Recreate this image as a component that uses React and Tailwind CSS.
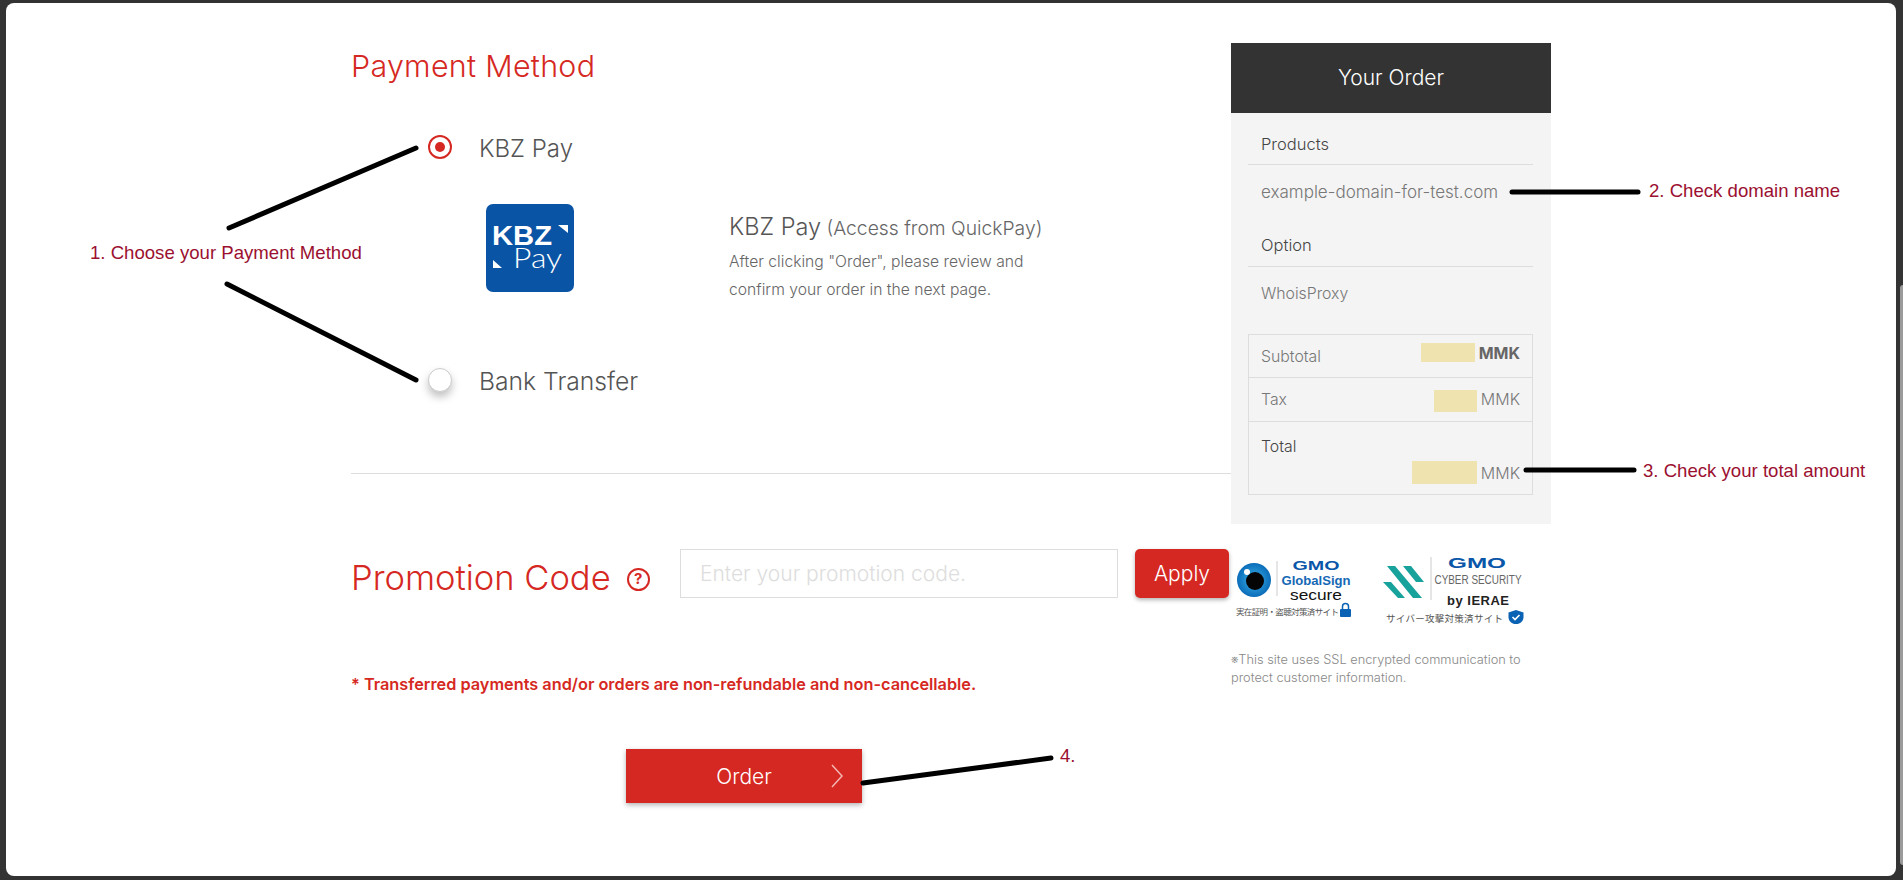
const bodyFont = "font-['Inter','Noto_Sans_CJK_JP',sans-serif]";

function GlobalSignBadge() {
  return (
    <svg width="125" height="68" viewBox="0 0 125 68" className="mt-[3px] shrink-0">
      <defs>
        <radialGradient id="eye" cx="50%" cy="50%" r="50%">
          <stop offset="0%" stopColor="#3db4ea" />
          <stop offset="100%" stopColor="#0a6cb8" />
        </radialGradient>
      </defs>
      <circle cx="23" cy="25" r="17" fill="url(#eye)" />
      <circle cx="24" cy="26" r="9" fill="#050505" />
      <circle cx="16" cy="17" r="3" fill="#fff" />
      <line x1="46" y1="6" x2="46" y2="41" stroke="#ccc" />
      <text x="85" y="15" textAnchor="middle" fontFamily="Liberation Sans" fontWeight="700" fontSize="12" fill="#0a56a8" textLength="47" lengthAdjust="spacingAndGlyphs">GMO</text>
      <text x="85" y="30" textAnchor="middle" fontFamily="Liberation Sans" fontWeight="700" fontSize="13" fill="#1568b5" textLength="69" lengthAdjust="spacingAndGlyphs">GlobalSign</text>
      <text x="85" y="45" textAnchor="middle" fontFamily="Liberation Sans" fontSize="15" fill="#111" textLength="52" lengthAdjust="spacingAndGlyphs">secure</text>
      <text x="5" y="60" fontFamily="Noto Sans CJK JP" fontSize="8.500" fill="#555" textLength="103">実在証明・盗聴対策済サイト</text>
      <rect x="109" y="54" width="11" height="8" rx="1" fill="#0a62b5" />
      <path d="M111.500 54v-2.500a3 3 0 0 1 6 0V54" fill="none" stroke="#0a62b5" strokeWidth="1.500" />
    </svg>
  );
}

function IeraeBadge() {
  return (
    <svg width="150" height="72" viewBox="0 0 150 72" className="shrink-0">
      <g fill="#17a39c">
        <polygon points="7,14 15,14 42,46 33,46" />
        <polygon points="23,14 31,14 44,30 36,30" />
        <polygon points="3,30 11,30 25,46 18,46" />
      </g>
      <line x1="51" y1="5" x2="51" y2="48" stroke="#ccc" />
      <text x="97" y="16" textAnchor="middle" fontFamily="Liberation Sans" fontWeight="700" fontSize="15" fill="#0a56a8" textLength="58" lengthAdjust="spacingAndGlyphs">GMO</text>
      <text x="98" y="32" textAnchor="middle" fontFamily="Liberation Sans" fontSize="12" fill="#666" textLength="87" lengthAdjust="spacingAndGlyphs">CYBER SECURITY</text>
      <text x="98" y="53" textAnchor="middle" fontFamily="Liberation Sans" fontWeight="700" fontSize="13" fill="#222" textLength="62" lengthAdjust="spacing">by IERAE</text>
      <text x="6" y="70" fontFamily="Noto Sans CJK JP" fontSize="9.500" fill="#555" textLength="117">サイバー攻撃対策済サイト</text>
      <path d="M136 58l7.500 2.500v5c0 3.500-3 6-7.500 7-4.500-1-7.500-3.500-7.500-7v-5z" fill="#0a62b5" />
      <path d="M132.500 65l2.500 2.500 4.500-4.500" fill="none" stroke="#fff" strokeWidth="1.600" />
    </svg>
  );
}

function KbzLogo() {
  return (
    <svg width="88" height="88" viewBox="0 0 88 88" className="shrink-0">
      <rect width="88" height="88" rx="7" fill="#0a54a5" />
      <text x="6" y="41" fontFamily="Liberation Sans" fontWeight="700" fontSize="28" fill="#fff" textLength="60" lengthAdjust="spacingAndGlyphs">KBZ</text>
      <text x="27" y="64" fontFamily="Lato" fontWeight="300" fontSize="27" fill="#fff" textLength="49" lengthAdjust="spacingAndGlyphs">Pay</text>
      <polygon points="72,21 82,21 82,29" fill="#fff" />
      <polygon points="7,56 7,64 16,64" fill="#fff" />
    </svg>
  );
}

function TotalRow({ label, box, amountClass, rowClass, labelClass }) {
  return (
    <div className={rowClass}>
      <span className={labelClass}>{label}</span>
      <div className="flex items-start justify-end gap-[4px]">
        <span className={box} />
        <span className={amountClass}>MMK</span>
      </div>
    </div>
  );
}

export default function App() {
  return (
    <div className={`relative h-[880px] w-full overflow-hidden bg-[#333] pl-[6px] pr-[7px] pt-[3px] pb-[4px] ${bodyFont}`}>
      <div className="flex h-full rounded-lg bg-white pl-[345px]">
        {/* left column */}
        <div className="w-[880px] shrink-0">
          <h2 className="mt-[45px] h-[36px] text-[30.400px] leading-[36px] font-light tracking-[0.3px] whitespace-nowrap text-[#d62822]">Payment Method</h2>

          <div className="mt-[47px] flex h-[32px] items-center pl-[77px]">
            <span className="flex h-[24px] w-[24px] items-center justify-center rounded-full border-2 border-[#d62822] bg-white">
              <span className="h-[10px] w-[10px] rounded-full bg-[#d62822]" />
            </span>
            <span className="ml-[27px] pt-[3px] text-[24px] font-light text-[#555]">KBZ Pay</span>
          </div>

          <div className="mt-[41px] flex h-[88px] pl-[135px]">
            <KbzLogo />
            <div className="ml-[155px] pt-[9px] text-[#666]">
              <p className="h-[28px] text-[19.300px] leading-[28px] font-light whitespace-nowrap">
                <span className="text-[23.500px] text-[#555]">KBZ Pay</span> (Access from QuickPay)
              </p>
              <p className="mt-[7px] text-[15.700px] leading-[28px] font-light whitespace-nowrap">After clicking "Order", please review and<br />confirm your order in the next page.</p>
            </div>
          </div>

          <div className="mt-[72px] flex h-[32px] items-center pl-[77px]">
            <span className="h-[24px] w-[24px] rounded-full border border-[#ccc] bg-white shadow-[0_5px_8px_rgba(0,0,0,0.25)]" />
            <span className="ml-[27px] pt-[3px] text-[24.700px] font-light whitespace-nowrap text-[#555]">Bank Transfer</span>
          </div>

          <div className="mt-[77px] border-t border-[#ddd]" />

          <div className="mt-[75px] flex h-[50px] items-start">
            <div className="flex h-[58px] w-[329px] items-center">
              <span className="text-[34.500px] leading-[40px] font-light whitespace-nowrap text-[#d62822]">Promotion Code</span>
              <span className="ml-[16px] mt-[3px] flex h-[23px] w-[23px] items-center justify-center rounded-full border-2 border-[#d62822] text-[15px] font-bold text-[#d62822]">?</span>
            </div>
            <div className="flex h-[49px] w-[438px] items-center border border-[#ddd] bg-white pl-[19px] text-[21px] font-light text-[#ddd]">Enter your promotion code.</div>
            <button className="ml-[17px] h-[49px] w-[94px] rounded-[5px] bg-[#d62822] text-[21px] font-light text-white shadow-[0_2px_4px_rgba(0,0,0,0.3)]">Apply</button>
          </div>

          <p className="mt-[74px] text-[16.300px] leading-[22px] font-semibold whitespace-nowrap text-[#d62822]">* Transferred payments and/or orders are non-refundable and non-cancellable.</p>

          <div className="mt-[54px] pl-[275px]">
            <button className="relative flex h-[54px] w-[236px] items-center justify-center bg-[#d62822] pt-[2px] text-[21px] font-light text-white shadow-[0_2px_5px_rgba(0,0,0,0.3)]">
              Order
              <svg width="14" height="24" viewBox="0 0 14 24" className="absolute right-[18px] top-[15px]">
                <polyline points="2,1 12,12 2,23" fill="none" stroke="#f3b6b3" strokeWidth="1.500" />
              </svg>
            </button>
          </div>
        </div>

        {/* order summary */}
        <div className="w-[320px] shrink-0 pt-[40px]">
          <div className="bg-[#f4f4f4] pb-[29px]">
            <div className="flex h-[70px] items-center justify-center bg-[#333] text-[21px] font-light text-white">Your Order</div>
            <div className="pl-[17px] pr-[18px]">
              <div className="flex h-[52px] items-center border-b border-[#ddd] pl-[13px] pt-[11px] text-[16.500px] font-light text-[#444]">Products</div>
              <div className="flex h-[56px] items-center pl-[13px] text-[17px] font-light whitespace-nowrap text-[#777]">example-domain-for-test.com</div>
              <div className="flex h-[46px] items-center border-b border-[#ddd] pl-[13px] pt-[4px] text-[16.500px] font-light text-[#444]">Option</div>
              <div className="flex h-[52px] items-center pl-[13px] pt-[1px] text-[15.800px] font-light text-[#777]">WhoisProxy</div>
              <div className="mt-[15px] border border-[#ddd]">
                <TotalRow
                  label="Subtotal"
                  rowClass="flex h-[43px] items-start justify-between border-b border-[#ddd] pl-[12px] pr-[12px] pt-[8px]"
                  labelClass="pt-[2px] text-[15.800px] font-light text-[#777]"
                  box="h-[19px] w-[54px] bg-[#efe3b0]"
                  amountClass="text-[16px] leading-[20px] font-bold text-[#666]"
                />
                <TotalRow
                  label="Tax"
                  rowClass="flex h-[44px] items-start justify-between border-b border-[#ddd] pl-[12px] pr-[12px] pt-[12px]"
                  labelClass="text-[15.800px] leading-[20px] font-light text-[#777]"
                  box="h-[22px] w-[43px] bg-[#efe3b0]"
                  amountClass="text-[16px] leading-[18px] font-light text-[#777]"
                />
                <div className="h-[72px] pl-[12px] pr-[12px] pt-[13px]">
                  <div className="text-[15.800px] font-light text-[#444]">Total</div>
                  <div className="mt-[2px] flex items-center justify-end gap-[4px]">
                    <span className="h-[23px] w-[65px] bg-[#efe3b0]" />
                    <span className="text-[16px] font-light text-[#777]">MMK</span>
                  </div>
                </div>
              </div>
            </div>
          </div>

          <div className="mt-[28px] flex gap-[24px]">
            <GlobalSignBadge />
            <IeraeBadge />
          </div>
          <p className="mt-[27px] w-[320px] text-[12.800px] leading-[18px] font-light text-[#888]">※This site uses SSL encrypted communication to protect customer information.</p>
        </div>
      </div>

      {/* annotations drawn on top of the screenshot */}
      <svg width="1903" height="880" viewBox="0 0 1903 880" className="pointer-events-none absolute inset-0">
        <g stroke="#000" strokeWidth="5" strokeLinecap="round">
          <line x1="229" y1="228" x2="416" y2="148" />
          <line x1="227" y1="284" x2="416" y2="380" />
          <line x1="1512" y1="192" x2="1638" y2="192" />
          <line x1="1526" y1="470" x2="1634" y2="470" />
          <line x1="863" y1="783" x2="1051" y2="758" />
        </g>
      </svg>
      <span className="absolute left-[90px] top-[244px] font-['Liberation_Sans',sans-serif] text-[18.600px] leading-[18px] whitespace-nowrap text-[#9b1030]">1. Choose your Payment Method</span>
      <span className="absolute left-[1649px] top-[182px] font-['Liberation_Sans',sans-serif] text-[18.600px] leading-[18px] whitespace-nowrap text-[#9b1030]">2. Check domain name</span>
      <span className="absolute left-[1643px] top-[462px] font-['Liberation_Sans',sans-serif] text-[18.600px] leading-[18px] whitespace-nowrap text-[#9b1030]">3. Check your total amount</span>
      <span className="absolute left-[1060px] top-[747px] font-['Liberation_Sans',sans-serif] text-[18.600px] leading-[18px] text-[#9b1030]">4.</span>

      {/* window scrollbar thumb */}
      <div className="absolute left-[1900px] top-[285px] h-[580px] w-[3px] rounded-l-sm bg-[#9a9a9a]" />
    </div>
  );
}
